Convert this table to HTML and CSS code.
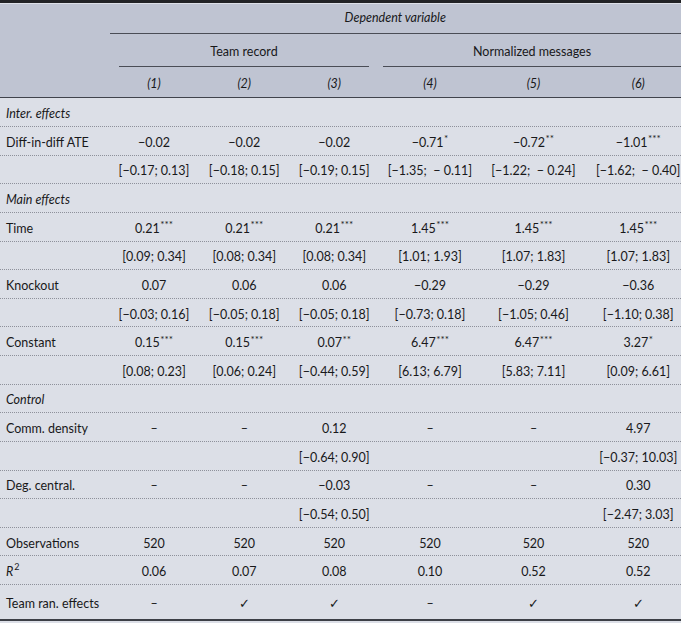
FILE: index.html
```html
<!DOCTYPE html>
<html>
<head>
<meta charset="utf-8">
<link rel="stylesheet" href="styles.css">
</head>
<body>
<div class="tbl">
  <div class="head">
    <div class="row h1"><div></div><div class="dep">Dependent variable</div></div>
    <div class="row h2"><div></div><div class="grp g1">Team record</div><div class="grp g2">Normalized messages</div></div>
    <div class="row h3"><div></div><div class="c it">(1)</div><div class="c it">(2)</div><div class="c it">(3)</div><div class="c it">(4)</div><div class="c it">(5)</div><div class="c c6 it">(6)</div></div>
  </div>
  <div class="body">
    <div class="row first"><div class="lab it">Inter. effects</div></div>
    <div class="row"><div class="lab">Diff-in-diff ATE</div><div class="c">−0.02</div><div class="c">−0.02</div><div class="c">−0.02</div><div class="c">−0.71<sup>*</sup></div><div class="c">−0.72<sup>**</sup></div><div class="c c6">−1.01<sup>***</sup></div></div>
    <div class="row"><div class="lab"></div><div class="c">[−0.17; 0.13]</div><div class="c">[−0.18; 0.15]</div><div class="c">[−0.19; 0.15]</div><div class="c">[−1.35; &nbsp;− 0.11]</div><div class="c">[−1.22; &nbsp;− 0.24]</div><div class="c c6">[−1.62; &nbsp;− 0.40]</div></div>
    <div class="row"><div class="lab it">Main effects</div></div>
    <div class="row"><div class="lab">Time</div><div class="c">0.21<sup>***</sup></div><div class="c">0.21<sup>***</sup></div><div class="c">0.21<sup>***</sup></div><div class="c">1.45<sup>***</sup></div><div class="c">1.45<sup>***</sup></div><div class="c c6">1.45<sup>***</sup></div></div>
    <div class="row"><div class="lab"></div><div class="c">[0.09; 0.34]</div><div class="c">[0.08; 0.34]</div><div class="c">[0.08; 0.34]</div><div class="c">[1.01; 1.93]</div><div class="c">[1.07; 1.83]</div><div class="c c6">[1.07; 1.83]</div></div>
    <div class="row"><div class="lab">Knockout</div><div class="c">0.07</div><div class="c">0.06</div><div class="c">0.06</div><div class="c">−0.29</div><div class="c">−0.29</div><div class="c c6">−0.36</div></div>
    <div class="row"><div class="lab"></div><div class="c">[−0.03; 0.16]</div><div class="c">[−0.05; 0.18]</div><div class="c">[−0.05; 0.18]</div><div class="c">[−0.73; 0.18]</div><div class="c">[−1.05; 0.46]</div><div class="c c6">[−1.10; 0.38]</div></div>
    <div class="row"><div class="lab">Constant</div><div class="c">0.15<sup>***</sup></div><div class="c">0.15<sup>***</sup></div><div class="c">0.07<sup>**</sup></div><div class="c">6.47<sup>***</sup></div><div class="c">6.47<sup>***</sup></div><div class="c c6">3.27<sup>*</sup></div></div>
    <div class="row"><div class="lab"></div><div class="c">[0.08; 0.23]</div><div class="c">[0.06; 0.24]</div><div class="c">[−0.44; 0.59]</div><div class="c">[6.13; 6.79]</div><div class="c">[5.83; 7.11]</div><div class="c c6">[0.09; 6.61]</div></div>
    <div class="row"><div class="lab it">Control</div></div>
    <div class="row"><div class="lab">Comm. density</div><div class="c">–</div><div class="c">–</div><div class="c">0.12</div><div class="c">–</div><div class="c">–</div><div class="c c6">4.97</div></div>
    <div class="row"><div class="lab"></div><div class="c"></div><div class="c"></div><div class="c">[−0.64; 0.90]</div><div class="c"></div><div class="c"></div><div class="c c6">[−0.37; 10.03]</div></div>
    <div class="row"><div class="lab">Deg. central.</div><div class="c">–</div><div class="c">–</div><div class="c">−0.03</div><div class="c">–</div><div class="c">–</div><div class="c c6">0.30</div></div>
    <div class="row"><div class="lab"></div><div class="c"></div><div class="c"></div><div class="c">[−0.54; 0.50]</div><div class="c"></div><div class="c"></div><div class="c c6">[−2.47; 3.03]</div></div>
    <div class="row"><div class="lab">Observations</div><div class="c">520</div><div class="c">520</div><div class="c">520</div><div class="c">520</div><div class="c">520</div><div class="c c6">520</div></div>
    <div class="row"><div class="lab"><i>R</i><sup class="two">2</sup></div><div class="c">0.06</div><div class="c">0.07</div><div class="c">0.08</div><div class="c">0.10</div><div class="c">0.52</div><div class="c c6">0.52</div></div>
    <div class="row last"><div class="lab">Team ran. effects</div><div class="c">–</div><div class="c">✓</div><div class="c">✓</div><div class="c">–</div><div class="c">✓</div><div class="c c6">✓</div></div>
  </div>
</div>
</body>
</html>
```
FILE: styles.css
```css
html, body {
  margin: 0;
  padding: 0;
  background: #dcdfe7;
}
body {
  font-family: "Lato", "Open Sans", sans-serif;
  font-size: 12.5px;
  color: #18181a;
  width: 681px;
  height: 623px;
  overflow: hidden;
  white-space: nowrap;
}
.tbl {
  border-top: 3px solid #222326;
  border-bottom: 2px solid #3c3f46;
}
.head {
  background: #bfc4d2;
  border-top: 1px solid #dde0e8;
  border-bottom: 1px solid #40434c;
}
.row {
  display: grid;
  grid-template-columns: 109.5px 89px 91.5px 88.5px 103px 104px 95.5px;
  align-items: stretch;
  box-sizing: border-box;
}
.row > div {
  display: flex;
  align-items: center;
}
.h1 { height: 30px; }
.h1 > div { padding-bottom: 3px; }
.h2 { height: 33px; }
.h2 > div { padding-top: 3px; }
.h3 { height: 30px; }
.h3 > div { padding-top: 3px; }
.dep {
  grid-column: 2 / 8;
  justify-content: center;
  font-style: italic;
  border-bottom: 1px solid #4a4d56;
}
.grp {
  grid-column: span 3;
  justify-content: center;
  border-bottom: 1px solid #4a4d56;
}
.g1 { margin: 0 9.5px 0 9.5px; }
.g2 { margin-left: 4.5px; }
.c { justify-content: center; }
.c6 { padding-left: 10px; }
.it { font-style: italic; }
.lab { padding-left: 6px; }
.body .row {
  height: 28.625px;
  border-bottom: 1px dotted #8e919b;
}
.body .row > div { padding-top: 3px; }
.body .row.first { height: 29px; }
.body .row.last { height: 34px; border-bottom: none; }
.body .row.last > div { padding-top: 2px; }
sup {
  font-size: 10px;
  line-height: 0;
  position: relative;
  top: -4px;
  vertical-align: baseline;
  margin-left: 0.5px;
}
sup.two { font-size: 9px; margin-left: 1px; top: -5px; }
```
